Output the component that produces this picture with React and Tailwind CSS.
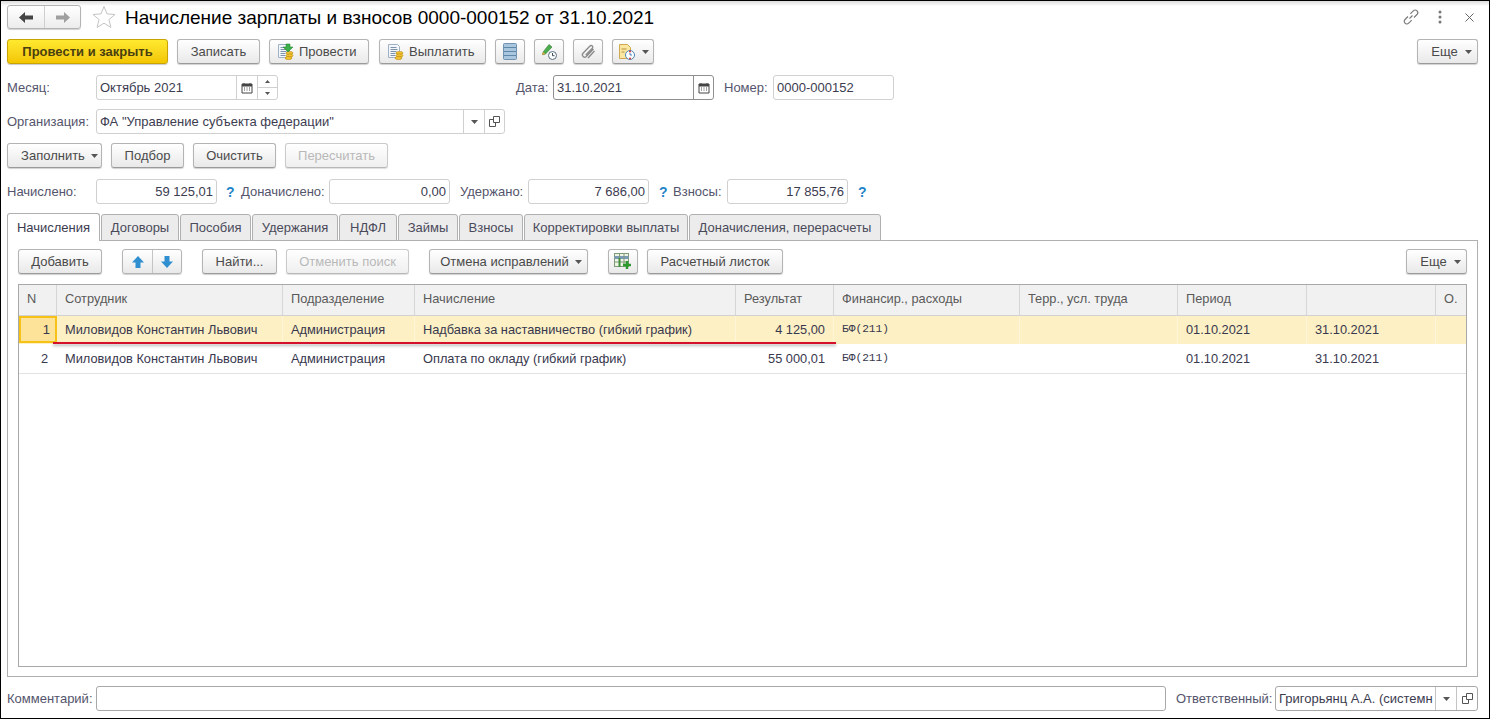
import React from "react";

const Caret = () => (
  <svg width="7" height="4" viewBox="0 0 7 4" className="shrink-0"><path d="M0 0h7L3.500 4z" fill="#555" /></svg>
);

const Btn = ({ w, children, disabled, className = "" }) => (
  <div
    style={{ width: w }}
    className={`h-[25px] shrink-0 flex items-center justify-center gap-[6px] rounded-[3px] border border-[#b4b4b4] border-b-[#9a9a9a] bg-gradient-to-b from-white to-[#e9e9e9] shadow-[0_1px_1px_rgba(0,0,0,0.18)] ${disabled ? "text-[#9b9b9b] opacity-70" : "text-[#4a4a4a]"} ${className}`}
  >
    {children}
  </div>
);

const Label = ({ w, children, className = "" }) => (
  <div style={{ width: w }} className={`shrink-0 text-[#54546c] whitespace-nowrap ${className}`}>{children}</div>
);

const Cal = () => (
  <svg width="12" height="12" viewBox="0 0 12 12">
    <path d="M1 2h10v9H1z" fill="#fff" stroke="#444" />
    <path d="M1 2h10v2.500H1z" fill="#444" />
    <path d="M3 1v2M9 1v2" stroke="#444" />
    <path d="M3 6h1M5.500 6h1M8 6h1M3 8h1M5.500 8h1M8 8h1" stroke="#444" />
  </svg>
);

const Open = () => (
  <svg width="11" height="11" viewBox="0 0 11 11" fill="none" stroke="#555">
    <path d="M4.500 .5h6v6h-6z" />
    <path d="M4.500 3.500h-4v7h6v-4" />
  </svg>
);

const Num = ({ v }) => (
  <div className="w-[121px] h-[25px] shrink-0 rounded-[3px] border border-[#d0d0d0] flex items-center justify-end pr-[3px] text-[#3c3c50]">{v}</div>
);

const Q = () => <div className="text-[#1f84c9] font-bold text-[14px] w-[8px] shrink-0">?</div>;

const Tab = ({ w, children, active }) => (
  <div
    style={{ width: w }}
    className={`shrink-0 rounded-t-[3px] border border-[#b0b0b0] flex items-center justify-center whitespace-nowrap ${active ? "h-[28px] bg-white border-b-0 z-10 text-[#3c3c50]" : "h-[27px] bg-[#ececec] text-[#4a4a5a]"}`}
  >
    {children}
  </div>
);

const cols = "grid grid-cols-[38px_226px_132px_321px_98px_186px_158px_129px_129px_32px]";

const Cell = ({ children, right, sel, mono }) => (
  <div
    className={`flex items-center overflow-hidden whitespace-nowrap border-r last:border-r-0 ${sel ? "border-[#fff6da]" : "border-transparent"} ${right ? "justify-end pr-[8px]" : "pl-[8px]"} ${mono ? "text-[11.2px]" : "text-[12.8px]"} text-[#38384e]`}
    style={mono ? { fontFamily: '"Liberation Mono", monospace' } : undefined}
  >
    {children}
  </div>
);

const Row = ({ n, acc, res, sel }) => (
  <div className={`${cols} h-[29px] border-b ${sel ? "bg-[#fdf0c4] border-[#fff]" : "border-[#e2e2e2]"}`}>
    {sel ? (
      <div className="border-2 border-[#f6c218] bg-[#fde39a] flex items-center justify-end pr-[5px] text-[#38384e] mb-[1px]">{n}</div>
    ) : (
      <Cell right>{n}</Cell>
    )}
    <Cell sel={sel}>Миловидов Константин Львович</Cell>
    <Cell sel={sel}>Администрация</Cell>
    <Cell sel={sel}>{acc}</Cell>
    <Cell sel={sel} right>{res}</Cell>
    <Cell sel={sel} mono>БФ(211)</Cell>
    <Cell sel={sel}></Cell>
    <Cell sel={sel}>01.10.2021</Cell>
    <Cell sel={sel}>31.10.2021</Cell>
    <Cell sel={sel}></Cell>
  </div>
);

const Head = ({ children }) => (
  <div className="flex items-center pl-[8px] pb-[2px] border-r border-[#d6d6d6] last:border-r-0 text-[#5a5a5a] text-[12.8px] whitespace-nowrap">{children}</div>
);

const Coins = () => (
  <g>
    <ellipse cx="12.500" cy="10" rx="3.500" ry="1.600" fill="#f2c230" stroke="#b98a10" strokeWidth=".6" />
    <ellipse cx="12.500" cy="12.500" rx="3.500" ry="1.600" fill="#f2c230" stroke="#b98a10" strokeWidth=".6" />
    <ellipse cx="11.500" cy="15" rx="3.500" ry="1.600" fill="#f2c230" stroke="#b98a10" strokeWidth=".6" />
  </g>
);

const DocLines = () => (
  <g>
    <path d="M1.500 1.500h9l2 2v11h-11z" fill="#f4f7fb" stroke="#9fb1c4" />
    <path d="M3.500 4.500h6M3.500 6.500h7M3.500 8.500h6M3.500 10.500h5M3.500 12.500h5" stroke="#7c93ab" />
  </g>
);

export default function App() {
  return (
    <div
      className="relative w-[1490px] h-[719px] bg-white overflow-hidden border-t border-l border-black border-r border-b text-[13px] leading-none"
      style={{ fontFamily: '"Liberation Sans", Arial, sans-serif' }}
    >
      <div className="h-[5px] -mb-[5px] bg-gradient-to-b from-[#dcdcdc] to-white" />
      <div className="px-[6px]">
        {/* title */}
        <div className="flex items-center h-[24px] mt-[4px]">
          <div className="w-[74px] h-[24px] flex rounded-[3px] border border-[#b4b4b4] bg-gradient-to-b from-white to-[#ececec] shadow-[0_1px_1px_rgba(0,0,0,0.18)]">
            <div className="w-[37px] flex items-center justify-center border-r border-[#cfcfcf]">
              <svg width="15" height="11" viewBox="0 0 15 11"><path d="M0 5.500 6 0v3.500h8v4H6V11z" fill="#444" /></svg>
            </div>
            <div className="flex-1 flex items-center justify-center">
              <svg width="15" height="11" viewBox="0 0 15 11"><path d="M15 5.500 9 0v3.500H1v4h8V11z" fill="#a0a0a0" /></svg>
            </div>
          </div>
          <svg className="ml-[11px]" width="24" height="24" viewBox="0 0 24 24"><path d="M12 1.500l3 7.400 8 .6-6.100 5.100 2 7.800L12 18.200 5.100 22.400l2-7.800L1 9.500l8-.6z" fill="#fff" stroke="#c4c4c4" /></svg>
          <div className="ml-[9px] text-[19px] text-black whitespace-nowrap">Начисление зарплаты и взносов 0000-000152 от 31.10.2021</div>
          <div className="ml-auto flex items-center pr-[9px]">
            <svg width="18" height="18" viewBox="0 0 18 18" fill="none" stroke="#777" strokeWidth="1.100"><path d="M7.500 10.500l3-3M6 8.500l-3 3a2.600 2.600 0 0 0 3.700 3.700l3-3M12 9.500l3-3A2.600 2.600 0 0 0 11.300 2.800l-3 3" /></svg>
            <svg className="ml-[18px]" width="4" height="14" viewBox="0 0 4 14" fill="#777"><circle cx="2" cy="2" r="1.500" /><circle cx="2" cy="7" r="1.500" /><circle cx="2" cy="12" r="1.500" /></svg>
            <svg className="ml-[23px]" width="9" height="9" viewBox="0 0 9 9" stroke="#666" fill="none"><path d="M.5.500l8 8M8.500.500l-8 8" /></svg>
          </div>
        </div>

        {/* toolbar */}
        <div className="flex items-center h-[25px] mt-[10px] gap-[9px]">
          <div className="w-[161px] h-[25px] shrink-0 flex items-center justify-center rounded-[3px] border border-[#c9a400] bg-gradient-to-b from-[#ffe92e] to-[#f3c600] shadow-[0_1px_1px_rgba(0,0,0,0.2)] font-bold text-[#4a3f10]">Провести и закрыть</div>
          <Btn w={83}>Записать</Btn>
          <Btn w={100} className="!justify-start pl-[7px] !gap-[4px]">
            <svg width="18" height="18" viewBox="0 0 18 18"><DocLines /><Coins /><path d="M9 1h4v3h3l-5 5-5-5h3z" fill="#3bb04a" stroke="#1f7d2e" strokeWidth=".5" /></svg>
            Провести
          </Btn>
          <Btn w={107} className="ml-[1px] !justify-start pl-[7px] !gap-[4px]">
            <svg width="18" height="18" viewBox="0 0 18 18"><DocLines /><Coins /></svg>
            Выплатить
          </Btn>
          <Btn w={30}>
            <svg width="14" height="17" viewBox="0 0 14 17"><rect x=".5" y=".5" width="13" height="16" rx="1" fill="#a9c6de" stroke="#6f93b0" /><path d="M1 4.500h12M1 8.500h12M1 12.500h12" stroke="#5f87a8" /></svg>
          </Btn>
          <Btn w={30}>
            <svg width="18" height="18" viewBox="0 0 18 18"><path d="M9 1.500l3 2.500-6.500 7-3 .8.800-3z" fill="#4cae4f" stroke="#2b7a2e" strokeWidth=".6" /><path d="M2 12l1-3 2.500 2z" fill="#d9a441" /><circle cx="12.500" cy="12.500" r="4" fill="#fff" stroke="#5a6f82" /><path d="M12.500 10v2.700h2" stroke="#3c4c5a" fill="none" /></svg>
          </Btn>
          <Btn w={30}>
            <svg width="16" height="16" viewBox="0 0 16 16" fill="none" stroke="#8a8a8a" strokeWidth="1.300"><path d="M13.500 5 6.300 12.500a2.300 2.300 0 0 1-3.300-3.200l7-7.300a1.600 1.600 0 0 1 2.300 2.300L5.800 11" /><path d="M14.500 7 8 14" /></svg>
          </Btn>
          <Btn w={42}>
            <svg width="18" height="18" viewBox="0 0 18 18"><path d="M1.500 1.500h8l3 3v11h-11z" fill="#fbe6a2" stroke="#cfa94f" /><path d="M3.500 6h5M3.500 9h3" stroke="#b8933c" /><circle cx="12" cy="12" r="4.500" fill="#fff" stroke="#4a86b8" /><circle cx="12" cy="8.500" r="1" fill="#d33" /><circle cx="12" cy="15.500" r="1" fill="#d33" /><path d="M12 10v2h2" stroke="#4a86b8" fill="none" /></svg>
            <Caret />
          </Btn>
          <Btn w={61} className="ml-auto mr-[5px] pl-[8px] !gap-[7px]">Еще <Caret /></Btn>
        </div>

        {/* month row */}
        <div className="flex items-center h-[25px] mt-[11px]">
          <Label w={89}>Месяц:</Label>
          <div className="w-[182px] h-[25px] flex rounded-[3px] border border-[#d0d0d0]">
            <div className="w-[140px] flex items-center pl-[3px] text-[#3c3c50] border-r border-[#d0d0d0]">Октябрь 2021</div>
            <div className="w-[21px] flex items-center justify-center border-r border-[#d0d0d0]"><Cal /></div>
            <div className="flex-1 flex flex-col">
              <div className="flex-1 flex items-center justify-center border-b border-[#d0d0d0]"><svg width="5" height="3" viewBox="0 0 5 3"><path d="M2.500 0 5 3H0z" fill="#555" /></svg></div>
              <div className="flex-1 flex items-center justify-center"><svg width="5" height="3" viewBox="0 0 5 3"><path d="M0 0h5L2.500 3z" fill="#555" /></svg></div>
            </div>
          </div>
          <Label w={37} className="ml-[238px]">Дата:</Label>
          <div className="w-[161px] h-[25px] flex rounded-[3px] border border-[#8f8f8f]">
            <div className="w-[140px] flex items-center pl-[3px] text-[#3c3c50] border-r border-[#8f8f8f]">31.10.2021</div>
            <div className="flex-1 flex items-center justify-center"><Cal /></div>
          </div>
          <Label w={49} className="ml-[10px]">Номер:</Label>
          <div className="w-[121px] h-[25px] rounded-[3px] border border-[#d0d0d0] flex items-center pl-[3px] text-[#3c3c50]">0000-000152</div>
        </div>

        {/* org */}
        <div className="flex items-center h-[25px] mt-[9px]">
          <Label w={89}>Организация:</Label>
          <div className="w-[409px] h-[25px] flex rounded-[3px] border border-[#d0d0d0]">
            <div className="w-[367px] flex items-center pl-[3px] text-[#3c3c50] border-r border-[#d0d0d0]">ФА "Управление субъекта федерации"</div>
            <div className="w-[21px] flex items-center justify-center border-r border-[#d0d0d0]"><Caret /></div>
            <div className="flex-1 flex items-center justify-center"><Open /></div>
          </div>
        </div>

        {/* fill */}
        <div className="flex items-center h-[25px] mt-[9px] gap-[9px]">
          <Btn w={95} className="pl-[10px]">Заполнить <Caret /></Btn>
          <Btn w={73}>Подбор</Btn>
          <Btn w={83}>Очистить</Btn>
          <Btn w={103} disabled>Пересчитать</Btn>
        </div>

        {/* totals */}
        <div className="flex items-center h-[25px] mt-[11px]">
          <Label w={89}>Начислено:</Label>
          <Num v="59 125,01" />
          <div className="ml-[9px]"><Q /></div>
          <Label w={88} className="ml-[7px]">Доначислено:</Label>
          <Num v="0,00" />
          <Label w={68} className="ml-[10px]">Удержано:</Label>
          <Num v="7 686,00" />
          <div className="ml-[10px]"><Q /></div>
          <Label w={54} className="ml-[6px]">Взносы:</Label>
          <Num v="17 855,76" />
          <div className="ml-[10px]"><Q /></div>
        </div>

        {/* tabs */}
        <div className="flex items-end gap-[1px] h-[28px] mt-[9px] relative -mb-[1px]">
          <Tab w={93} active>Начисления</Tab>
          <Tab w={78}>Договоры</Tab>
          <Tab w={71}>Пособия</Tab>
          <Tab w={86}>Удержания</Tab>
          <Tab w={58}>НДФЛ</Tab>
          <Tab w={60}>Займы</Tab>
          <Tab w={64}>Взносы</Tab>
          <Tab w={164}>Корректировки выплаты</Tab>
          <Tab w={192}>Доначисления, перерасчеты</Tab>
        </div>

        {/* panel */}
        <div className="w-[1471px] h-[437px] border border-[#b0b0b0] px-[10px] pt-[8px]">
          <div className="flex items-center h-[25px]">
            <Btn w={84}>Добавить</Btn>
            <div className="ml-[20px] w-[60px] h-[25px] flex rounded-[3px] border border-[#b4b4b4] bg-gradient-to-b from-white to-[#e9e9e9] shadow-[0_1px_1px_rgba(0,0,0,0.18)]">
              <div className="w-[30px] flex items-center justify-center border-r border-[#c4c4c4]">
                <svg width="12" height="12" viewBox="0 0 12 12"><path d="M6 0l6 6.500H8.500V12h-5V6.500H0z" fill="#2f8fd0" /></svg>
              </div>
              <div className="flex-1 flex items-center justify-center">
                <svg width="12" height="12" viewBox="0 0 12 12"><path d="M6 12 0 5.500h3.500V0h5v5.500H12z" fill="#2f8fd0" /></svg>
              </div>
            </div>
            <Btn w={75} className="ml-[20px]">Найти...</Btn>
            <Btn w={123} disabled className="ml-[9px]">Отменить поиск</Btn>
            <Btn w={159} className="ml-[20px] pl-[5px]">Отмена исправлений <Caret /></Btn>
            <Btn w={30} className="ml-[20px]">
              <svg width="18" height="17" viewBox="0 0 18 17"><rect x=".5" y=".5" width="14" height="13" fill="#eef3e6" stroke="#7f9a78" /><path d="M.5 4.500h14" stroke="#7a9ab5" strokeWidth="3" /><path d="M5.500 1v13M10 1v13M1 9h13" stroke="#7f9a78" /><path d="M5.500 5v9" stroke="#3f8f3f" strokeWidth="2" /><path d="M13 8v8M9 12h8" stroke="#2c9a2c" strokeWidth="2.500" /></svg>
            </Btn>
            <Btn w={136} className="ml-[9px]">Расчетный листок</Btn>
            <Btn w={61} className="ml-auto pl-[8px] !gap-[7px]">Еще <Caret /></Btn>
          </div>

          {/* table */}
          <div className="mt-[10px] h-[383px] border border-[#a8a8a8]">
            <div className={`${cols} h-[31px] bg-[#f1f1f1] border-b border-[#d2d2d2]`}>
              <Head>N</Head>
              <Head>Сотрудник</Head>
              <Head>Подразделение</Head>
              <Head>Начисление</Head>
              <Head>Результат</Head>
              <Head>Финансир., расходы</Head>
              <Head>Терр., усл. труда</Head>
              <Head>Период</Head>
              <Head></Head>
              <Head>О.</Head>
            </div>
            <Row sel n="1" acc="Надбавка за наставничество (гибкий график)" res="4 125,00" />
            <Row n="2" acc="Оплата по окладу (гибкий график)" res="55 000,01" />
          </div>
        </div>

        {/* bottom */}
        <div className="flex items-center h-[25px] mt-[9px]">
          <Label w={89}>Комментарий:</Label>
          <div className="w-[1070px] h-[25px] rounded-[3px] border border-[#a8a8a8]" />
          <Label w={99} className="ml-[10px]">Ответственный:</Label>
          <div className="w-[203px] h-[25px] flex rounded-[3px] border border-[#a8a8a8]">
            <div className="w-[160px] flex items-center pl-[3px] text-[#3c3c50] border-r border-[#c4c4c4] overflow-hidden whitespace-nowrap">Григорьянц А.А. (системн</div>
            <div className="w-[21px] flex items-center justify-center border-r border-[#c4c4c4]"><Caret /></div>
            <div className="flex-1 flex items-center justify-center"><Open /></div>
          </div>
        </div>
      </div>

      {/* red annotation underline */}
      <div className="absolute left-[52px] top-[341px] w-[783px] h-[2px] bg-[#d4102c] shadow-[0_2px_3px_rgba(0,0,0,0.3)]" />
    </div>
  );
}
